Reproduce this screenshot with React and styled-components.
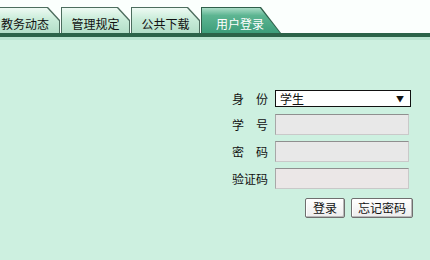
import React from "react";
import styled, { createGlobalStyle } from "styled-components";

const GlobalStyle = createGlobalStyle`
  html, body {
    margin: 0;
    padding: 0;
    background: #cdf0e0;
    font-family: "Noto Sans CJK SC", "Noto Sans", sans-serif;
    font-size: 12px;
  }
`;

const tabs = [
  { label: "教务动态", width: 70 },
  { label: "管理规定", width: 69 },
  { label: "公共下载", width: 69 },
];

const App = () => {
  return (
    <Page>
      <GlobalStyle />
      <Header>
        <TabRow>
          {tabs.map((t) => (
            <Tab key={t.label} $width={t.width}>
              <TabFace>{t.label}</TabFace>
            </Tab>
          ))}
          <ActiveTab>
            <ActiveFace>用户登录</ActiveFace>
          </ActiveTab>
        </TabRow>
      </Header>
      <Bar />
      <Main>
        <Form>
          <Label>身　份</Label>
          <FakeSelect>
            <span>学生</span>
            <Arrow>▼</Arrow>
          </FakeSelect>
          <Label>学　号</Label>
          <Input />
          <Label>密　码</Label>
          <Input type="password" />
          <Label>验证码</Label>
          <Input $captcha />
          <Buttons>
            <Button $min={40}>登录</Button>
            <Button>忘记密码</Button>
          </Buttons>
        </Form>
      </Main>
    </Page>
  );
};

export default App;

const Page = styled.div`
  width: 430px;
  height: 260px;
  overflow: hidden;
  background: #cdf0e0;
`;

const Header = styled.div`
  height: 33px;
  background: #fbfffd;
  display: flex;
  align-items: flex-end;
`;

const TabRow = styled.div`
  display: flex;
  align-items: flex-end;
  margin-left: -10px;
`;

const Tab = styled.div`
  width: ${(p) => p.$width}px;
  height: 26px;
  margin-right: 1px;
  background: #4d6d5e;
  clip-path: polygon(0 0, calc(100% - 12px) 0, 100% 13px, 100% 100%, 0 100%);
  display: flex;
`;

const TabFace = styled.div`
  flex: 1;
  margin: 1px 1px 0 1px;
  background: linear-gradient(#eefaf3, #c9ecd9 45%, #b3dfc8);
  clip-path: polygon(0 0, calc(100% - 12px) 0, 100% 13px, 100% 100%, 0 100%);
  display: flex;
  align-items: flex-end;
  justify-content: center;
  padding-bottom: 2px;
  color: #111;
  line-height: 14px;
`;

const ActiveTab = styled.div`
  width: 80px;
  height: 26px;
  background: #2f5f4a;
  clip-path: polygon(0 0, calc(100% - 20px) 0, 100% 100%, 0 100%);
  display: flex;
`;

const ActiveFace = styled.div`
  flex: 1;
  margin: 1px 1px 0 1px;
  background: linear-gradient(#a9dcc6, #5db592 30%, #3d9e7a);
  clip-path: polygon(0 0, calc(100% - 20px) 0, 100% 100%, 0 100%);
  display: flex;
  align-items: flex-end;
  padding: 0 0 2px 14px;
  color: #fff;
  line-height: 14px;
`;

const Bar = styled.div`
  height: 4px;
  background: #2c6449;
  border-bottom: 3px solid #b9e5d0;
`;

const Main = styled.div`
  display: flex;
  justify-content: flex-end;
  padding: 50px 19px 0 0;
`;

const Form = styled.div`
  display: grid;
  grid-template-columns: 37px 136px;
  column-gap: 7px;
  row-gap: 6px;
  align-items: center;
`;

const Label = styled.div`
  color: #111;
  text-align: right;
  white-space: nowrap;
  line-height: 14px;
`;

const FakeSelect = styled.div`
  height: 15px;
  border: 1px solid #111;
  background: #fff;
  display: flex;
  align-items: center;
  justify-content: space-between;
  padding: 0 6px 0 4px;
  color: #111;
  line-height: 14px;
  margin-bottom: 1px;
`;

const Arrow = styled.span`
  font-size: 8px;
`;

const Input = styled.input`
  box-sizing: border-box;
  width: 134px;
  height: 21px;
  margin: 0;
  background: ${(p) => (p.$captcha ? "#ebe7e7" : "#e8e8e8")};
  border: 1px solid #c9c9c9;
  border-top-color: #8f8f8f;
  border-left-color: #a8a8a8;
  outline: none;
`;

const Buttons = styled.div`
  grid-column: 1 / span 2;
  display: flex;
  justify-content: flex-end;
  gap: 6px;
  margin: 3px -2px 0 0;
`;

const Button = styled.button`
  height: 20px;
  min-width: ${(p) => p.$min || 0}px;
  padding: 0 6px;
  font-family: inherit;
  font-size: 12px;
  line-height: 14px;
  color: #111;
  background: linear-gradient(#ffffff, #ededed);
  border: 1px solid #6f6f6f;
  border-radius: 2px;
  box-shadow: inset -1px -1px 0 #b8b8b8, inset 1px 1px 0 #fff;
`;
